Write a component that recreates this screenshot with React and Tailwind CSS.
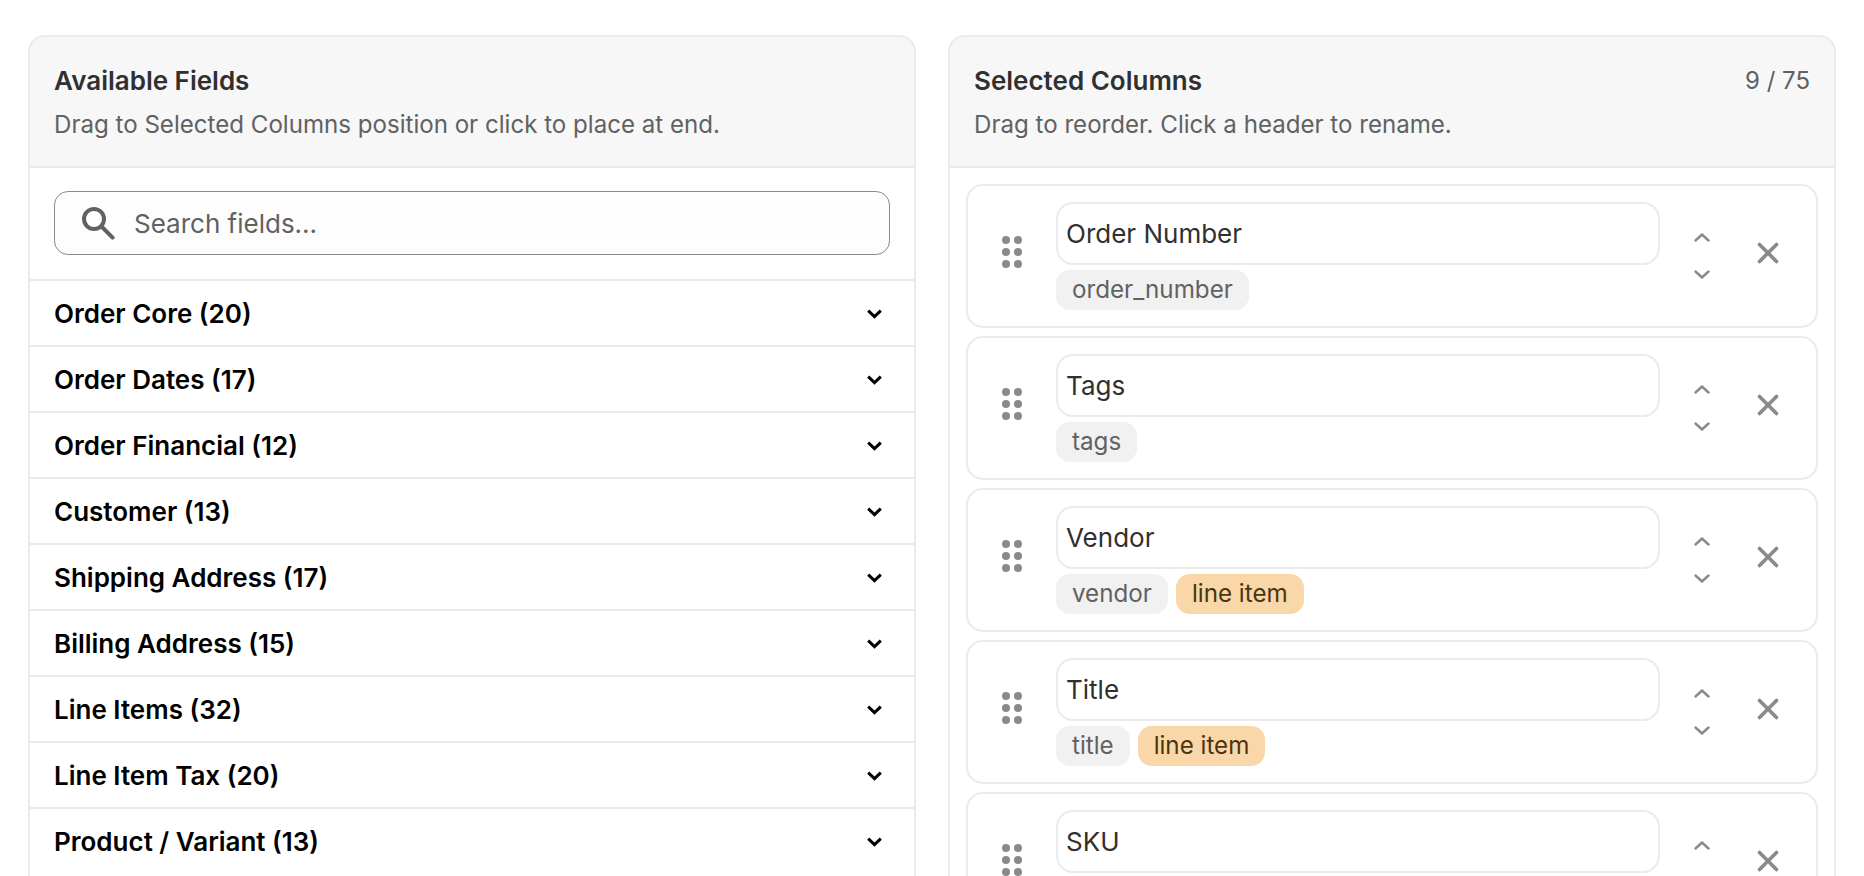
import { X } from "lucide-react";

const groups = [
  "Order Core (20)",
  "Order Dates (17)",
  "Order Financial (12)",
  "Customer (13)",
  "Shipping Address (17)",
  "Billing Address (15)",
  "Line Items (32)",
  "Line Item Tax (20)",
  "Product / Variant (13)",
];

const columns = [
  { label: "Order Number", field: "order_number" },
  { label: "Tags", field: "tags" },
  { label: "Vendor", field: "vendor", lineItem: true },
  { label: "Title", field: "title", lineItem: true },
  { label: "SKU", field: "sku", lineItem: true },
];

function Chevron({ up, className }) {
  return (
    <svg viewBox="0 0 16 9" fill="none" className={className}>
      <path
        d={up ? "M1.5 7.5 8 1.5l6.5 6" : "M1.5 1.5 8 7.5l6.5-6"}
        stroke="currentColor"
        strokeWidth="2.4"
        strokeLinecap="round"
        strokeLinejoin="round"
      />
    </svg>
  );
}

function GroupChevron() {
  return (
    <svg viewBox="0 0 15 10" fill="none" className="w-[15px] h-[10px] mt-[1px] text-black">
      <path d="M1.2 1.6 7.5 7.6l6.3-6" stroke="currentColor" strokeWidth="3" />
    </svg>
  );
}

function DragHandle() {
  return (
    <svg viewBox="0 0 20 32" className="w-[20px] h-[32px] mb-[9px] text-[#8a8a8a]" fill="currentColor">
      <circle cx="4" cy="4" r="4" />
      <circle cx="16" cy="4" r="4" />
      <circle cx="4" cy="16" r="4" />
      <circle cx="16" cy="16" r="4" />
      <circle cx="4" cy="28" r="4" />
      <circle cx="16" cy="28" r="4" />
    </svg>
  );
}

function ColumnRow({ column }) {
  return (
    <div className="flex items-center rounded-[17px] border-2 border-[#ebebeb] bg-white py-[16px] pl-[34px] pr-[30px]">
      <DragHandle />
      <div className="ml-[34px] w-[604px]">
        <div className="flex h-[63px] items-center rounded-[17px] border-2 border-[#ebebeb] px-[8px] text-[26px] text-[#303030]">
          {column.label}
        </div>
        <div className="mt-[5px] flex gap-[8px]">
          <span className="flex h-[40px] items-center rounded-[14px] bg-[#f1f1f1] px-[16px] text-[24.2px] text-[#616161]">
            {column.field}
          </span>
          {column.lineItem && (
            <span className="flex h-[40px] items-center rounded-[14px] bg-[#f9d7a8] px-[16px] text-[24.2px] text-[#4a3510]">
              line item
            </span>
          )}
        </div>
      </div>
      <div className="ml-[34px] flex w-[16px] flex-col items-center gap-[28px] text-[#8a8a8a]">
        <Chevron up className="w-[16px] h-[9px]" />
        <Chevron className="w-[16px] h-[9px]" />
      </div>
      <X className="ml-[41px] mb-[6px] text-[#8a8a8a]" size={34} strokeWidth={2.6} />
    </div>
  );
}

export default function App() {
  return (
    <div className="h-[876px] overflow-hidden bg-white font-['Inter',sans-serif]">
      <div className="grid grid-cols-2 gap-[32px] px-[28px] pt-[35px]">
        {/* Available fields */}
        <div className="rounded-t-[17px] border-2 border-[#ebebeb]">
          <div className="h-[131px] rounded-t-[15px] border-b-2 border-[#ebebeb] bg-[#f7f7f7] px-[24px] pt-[27px]">
            <h2 className="text-[26px] font-semibold leading-[33px] text-[#303030]">Available Fields</h2>
            <p className="mt-[11px] text-[24.1px] leading-[33px] text-[#616161]">
              Drag to Selected Columns position or click to place at end.
            </p>
          </div>
          <div className="px-[24px] pt-[23px] pb-[24px]">
            <div className="flex h-[64px] items-center rounded-[14px] border border-[#8a8a8a] bg-[#fdfdfd] pl-[27px]">
              <svg viewBox="0 0 33 33" fill="none" className="w-[33px] h-[33px] text-[#616161]" stroke="currentColor" strokeWidth="4">
                <circle cx="12" cy="12" r="10" />
                <path d="M19.5 19.5 30.6 30.6" strokeLinecap="round" />
              </svg>
              <span className="ml-[19px] text-[26px] text-[#616161]">Search fields...</span>
            </div>
          </div>
          {groups.map((group) => (
            <div
              key={group}
              className="flex h-[66px] items-center justify-between border-t-2 border-[#ebebeb] pl-[24px] pr-[32px]"
            >
              <span className="text-[26px] font-semibold text-black">{group}</span>
              <GroupChevron />
            </div>
          ))}
        </div>

        {/* Selected columns */}
        <div className="rounded-t-[17px] border-2 border-[#ebebeb]">
          <div className="flex h-[131px] items-start justify-between rounded-t-[15px] border-b-2 border-[#ebebeb] bg-[#f7f7f7] px-[24px] pt-[27px]">
            <div>
              <h2 className="text-[26px] font-semibold leading-[33px] text-[#303030]">Selected Columns</h2>
              <p className="mt-[11px] text-[24.1px] leading-[33px] text-[#616161]">
                Drag to reorder. Click a header to rename.
              </p>
            </div>
            <span className="text-[24px] leading-[33px] text-[#616161]">9 / 75</span>
          </div>
          <div className="flex flex-col gap-[8px] px-[16px] pt-[16px]">
            {columns.map((column) => (
              <ColumnRow key={column.field} column={column} />
            ))}
          </div>
        </div>
      </div>
    </div>
  );
}
